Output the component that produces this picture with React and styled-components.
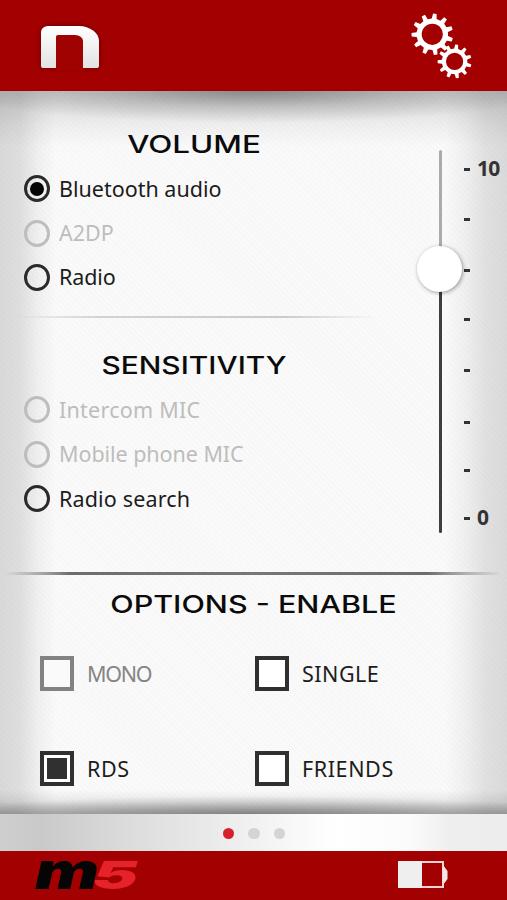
import { useState } from "react";
import styled, { createGlobalStyle } from "styled-components";

const GlobalStyle = createGlobalStyle`
  * {
    box-sizing: border-box;
  }
  body {
    margin: 0;
    background: #fafafa;
    font-family: "Noto Sans", "Open Sans", sans-serif;
  }
`;

const Screen = styled.div`
  width: 507px;
  height: 900px;
  display: flex;
  flex-direction: column;
  overflow: hidden;
`;

const Header = styled.header`
  height: 91px;
  flex: none;
  display: flex;
  justify-content: space-between;
  align-items: flex-start;
  padding: 11px 34px 0 41px;
  background: #a30101;
`;

const BrandMark = styled.div`
  width: 58px;
  height: 42px;
  margin-top: 15px;
  padding: 9px 16px 0 15px;
  border-radius: 7px 20px 2px 2px / 6px 15px 2px 2px;
  background: linear-gradient(#ffffff, #e2e2e2);
  box-shadow: 0 0 5px rgba(70, 0, 0, 0.7);

  &::after {
    content: "";
    display: block;
    height: 35px;
    border-radius: 2px 8px 0 0 / 2px 6px 0 0;
    background: #a00101;
  }
`;

const Main = styled.main`
  height: 723px;
  flex: none;
  background:
    radial-gradient(ellipse 300px 32px at 50% 0, rgba(0, 0, 0, 0.34), rgba(0, 0, 0, 0.14) 50%, transparent),
    linear-gradient(rgba(0, 0, 0, 0.17), rgba(0, 0, 0, 0.1) 16px, rgba(0, 0, 0, 0.05) 32px, transparent 56px),
    radial-gradient(ellipse 330px 18px at 50% 100%, rgba(0, 0, 0, 0.3), transparent),
    linear-gradient(0deg, rgba(0, 0, 0, 0.26), rgba(0, 0, 0, 0.08) 12px, transparent 24px),
    repeating-linear-gradient(45deg, rgba(0, 0, 0, 0.012) 0 2px, transparent 2px 4px),
    linear-gradient(90deg, #d9d9d9, #dfdfdf 20px, #f0f0f0 38px, #fafafa 56px, #fafafa 445px, #f0f0f0 465px, #e1e1e1 485px, #dadada);
`;

const Levels = styled.section`
  height: 481px;
  display: grid;
  grid-template-columns: 388px 1fr;
`;

const Group = styled.div`
  padding-top: ${({ $top }) => $top}px;
`;

const Title = styled.h2`
  height: 40px;
  margin: 0 0 3px;
  font-family: Inter, sans-serif;
  font-size: 24.5px;
  font-weight: 500;
  line-height: 41px;
  text-align: center;
  white-space: nowrap;
  color: #0b0b0b;
  transform: scaleX(${({ $stretch }) => $stretch});
`;

const RadioRow = styled.div`
  height: 44.4px;
  display: flex;
  align-items: center;
  padding-left: 24px;
  gap: 9px;
  color: ${({ $disabled }) => ($disabled ? "#bdbdbd" : "#1c1c1c")};
  cursor: ${({ $disabled }) => ($disabled ? "default" : "pointer")};
`;

const RadioCircle = styled.span`
  width: 26px;
  height: 27px;
  flex: none;
  display: grid;
  place-items: center;
  border: 3px solid ${({ $disabled }) => ($disabled ? "#bdbdbd" : "#2a2a2a")};
  border-radius: 50%;

  &::after {
    content: "";
    width: 14px;
    height: 14px;
    border-radius: 50%;
    background: ${({ $checked }) => ($checked ? "#050505" : "transparent")};
  }
`;

const Label = styled.span`
  font-size: 21.5px;
  line-height: 28px;
  letter-spacing: ${({ $spacing = 0 }) => $spacing}px;
  white-space: nowrap;
`;

const Divider = styled.hr`
  width: 370px;
  height: 2px;
  margin: 16px 0 0 6px;
  border: none;
  background: linear-gradient(90deg, transparent, #d3d3d3 25%, #cacaca 75%, transparent);
`;

const StrongDivider = styled.hr`
  height: 3px;
  margin: 0 5px;
  border: none;
  background: linear-gradient(90deg, transparent, #6d6d6d 13%, #777 50%, #6d6d6d 85%, transparent);
`;

const Slider = styled.div`
  display: flex;
  padding: 53px 0 0 51px;
`;

const Track = styled.div`
  position: relative;
  width: 3px;
  height: 383px;
  margin-top: 6px;
  border-radius: 2px;
  background: linear-gradient(#ababab 120px, #3e3e3e 120px);
`;

const Knob = styled.div`
  position: absolute;
  top: 96px;
  left: -22px;
  width: 45px;
  height: 46px;
  border-radius: 50%;
  background: #fff;
  box-shadow: 1px 1px 4px rgba(0, 0, 0, 0.4);
`;

const Scale = styled.div`
  margin-left: 22px;
  padding-top: 13px;
`;

const Tick = styled.div`
  height: 24px;
  margin-bottom: ${({ $gap }) => $gap}px;
  display: flex;
  align-items: center;
  gap: 7px;
  font-size: 20px;
  font-weight: 700;
  line-height: 22px;
  color: #333;

  &::before {
    content: "";
    width: 6px;
    height: 3px;
    background: #333;
  }
`;

const TickValue = styled.span`
  height: 24px;
  font-size: 21px;
  letter-spacing: -0.8px;
`;

const Options = styled.section`
  padding-top: 9px;
`;

const OptionGrid = styled.div`
  display: grid;
  grid-template-columns: 215px 1fr;
  grid-auto-rows: 95px;
  padding-left: 40px;
  margin-top: -1px;
`;

const Option = styled.div`
  display: flex;
  align-items: center;
  gap: 13px;
  color: ${({ $disabled }) => ($disabled ? "#858585" : "#1c1c1c")};
  cursor: ${({ $disabled }) => ($disabled ? "default" : "pointer")};
`;

const Box = styled.span`
  width: 34px;
  height: 35px;
  flex: none;
  padding: 3px;
  border: 4px solid ${({ $disabled }) => ($disabled ? "#828282" : "#303030")};
  background: ${({ $disabled }) => ($disabled ? "#fafafa" : "#fff")};

  &::after {
    content: "";
    display: block;
    height: 100%;
    background: ${({ $checked }) => ($checked ? "#303030" : "transparent")};
  }
`;

const Pager = styled.nav`
  height: 37px;
  flex: none;
  display: flex;
  justify-content: center;
  align-items: center;
  gap: 14px;
  padding: 2px 0 0 1px;
  background: linear-gradient(90deg, #cfcfcf, #c9c9c9 40px, #dcdcdc 130px, #efefef 240px, #fff 335px, #fbfbfb 410px, #eee 450px, #ededed);
`;

const Dot = styled.span`
  width: 11.5px;
  height: 11.5px;
  border-radius: 50%;
  background: ${({ $active }) => ($active ? "#d6202b" : "#d4d4d4")};
`;

const Footer = styled.footer`
  height: 49px;
  flex: none;
  display: flex;
  justify-content: space-between;
  align-items: flex-start;
  padding: 0 59px 0 34px;
  background: #a30101;
`;

const LogoSvg = styled.svg`
  overflow: visible;
`;

const LogoText = styled.text`
  font-family: Inter, sans-serif;
  font-weight: 900;
  font-style: italic;
`;

const BatterySvg = styled.svg`
  margin-top: 10px;
`;

// closed outline of a cog, with the hole cut out by the even-odd rule
function gearPath(cx, cy, outer, body, hole, teeth = 11) {
  const step = (Math.PI * 2) / teeth;
  const start = (-83 * Math.PI) / 180;
  const at = (r, a) =>
    `${(cx + r * Math.cos(a)).toFixed(2)} ${(cy + r * Math.sin(a)).toFixed(2)}`;
  const points = [];
  for (let i = 0; i < teeth; i++) {
    const a = start + i * step;
    points.push(at(body, a - step * 0.27), at(outer, a - step * 0.15));
    points.push(at(outer, a + step * 0.15), at(body, a + step * 0.27));
  }
  return `M${points.join("L")}Z M${cx - hole} ${cy}a${hole} ${hole} 0 1 0 ${hole * 2} 0a${hole} ${hole} 0 1 0 ${-hole * 2} 0Z`;
}

function Gears() {
  return (
    <svg width="62" height="70" viewBox="411 11 62 70" fill="#fff" fillRule="evenodd">
      <path d={gearPath(432.3, 34.3, 20.8, 15.8, 10.6)} />
      <path d={gearPath(454.6, 61.4, 17, 12.8, 8.6)} />
    </svg>
  );
}

function Battery() {
  return (
    <BatterySvg width="50" height="28" viewBox="0 0 50 28">
      <rect x="1" y="1" width="44" height="25" fill="#a30101" stroke="#f3d3d3" strokeWidth="2" />
      <rect x="0" y="0" width="24" height="27" fill="#efefef" />
      <path d="M45 4L49.5 10V18L45 24Z" fill="#f5e6e6" />
    </BatterySvg>
  );
}

const volumeItems = [
  { name: "Bluetooth audio" },
  { name: "A2DP", disabled: true },
  { name: "Radio", spacing: -0.1 },
];

const sensitivityItems = [
  { name: "Intercom MIC", disabled: true, spacing: 0.25 },
  { name: "Mobile phone MIC", disabled: true, spacing: -0.05 },
  { name: "Radio search", spacing: 0.15 },
];

const optionItems = [
  { name: "MONO", disabled: true, spacing: -1.3 },
  { name: "SINGLE", spacing: 0.5 },
  { name: "RDS", spacing: 0.6 },
  { name: "FRIENDS", spacing: 0.6 },
];

const ticks = [
  { value: "10", gap: 26 },
  { gap: 27.5 },
  { gap: 24.5 },
  { gap: 27 },
  { gap: 28 },
  { gap: 24.5 },
  { gap: 23.5 },
  { value: "0", gap: 0 },
];

function RadioList({ items, selected, onSelect }) {
  return items.map(({ name, disabled, spacing }) => (
    <RadioRow key={name} $disabled={disabled} onClick={() => !disabled && onSelect(name)}>
      <RadioCircle $disabled={disabled} $checked={selected === name} />
      <Label $spacing={spacing}>{name}</Label>
    </RadioRow>
  ));
}

export default function App() {
  const [selected, setSelected] = useState("Bluetooth audio");
  const [enabled, setEnabled] = useState(["RDS"]);

  function toggleOption(name) {
    setEnabled((prev) =>
      prev.includes(name) ? prev.filter((item) => item !== name) : [...prev, name]
    );
  }

  return (
    <Screen>
      <GlobalStyle />
      <Header>
        <BrandMark />
        <Gears />
      </Header>
      <Main>
        <Levels>
          <div>
            <Group $top={32.5}>
              <Title $stretch={1.28}>VOLUME</Title>
              <RadioList items={volumeItems} selected={selected} onSelect={setSelected} />
            </Group>
            <Divider />
            <Group $top={27}>
              <Title $stretch={1.22}>SENSITIVITY</Title>
              <RadioList items={sensitivityItems} selected={selected} onSelect={setSelected} />
            </Group>
          </div>
          <Slider>
            <Track>
              <Knob />
            </Track>
            <Scale>
              {ticks.map(({ value, gap }, index) => (
                <Tick key={index} $gap={gap}>
                  {value && <TickValue>{value}</TickValue>}
                </Tick>
              ))}
            </Scale>
          </Slider>
        </Levels>
        <StrongDivider />
        <Options>
          <Title $stretch={1.245}>OPTIONS - ENABLE</Title>
          <OptionGrid>
            {optionItems.map(({ name, disabled, spacing }) => (
              <Option key={name} $disabled={disabled} onClick={() => !disabled && toggleOption(name)}>
                <Box $disabled={disabled} $checked={enabled.includes(name)} />
                <Label $spacing={spacing}>{name}</Label>
              </Option>
            ))}
          </OptionGrid>
        </Options>
      </Main>
      <Pager>
        <Dot $active />
        <Dot />
        <Dot />
      </Pager>
      <Footer>
        <LogoSvg width="106" height="49" viewBox="34 851 106 49">
          <LogoText x="35" y="889" fontSize="51" textLength="64" lengthAdjust="spacingAndGlyphs" fill="#050505">
            m
          </LogoText>
          <LogoText x="92" y="889" fontSize="39" textLength="46" lengthAdjust="spacingAndGlyphs" fill="#e6222b">
            5
          </LogoText>
        </LogoSvg>
        <Battery />
      </Footer>
    </Screen>
  );
}
